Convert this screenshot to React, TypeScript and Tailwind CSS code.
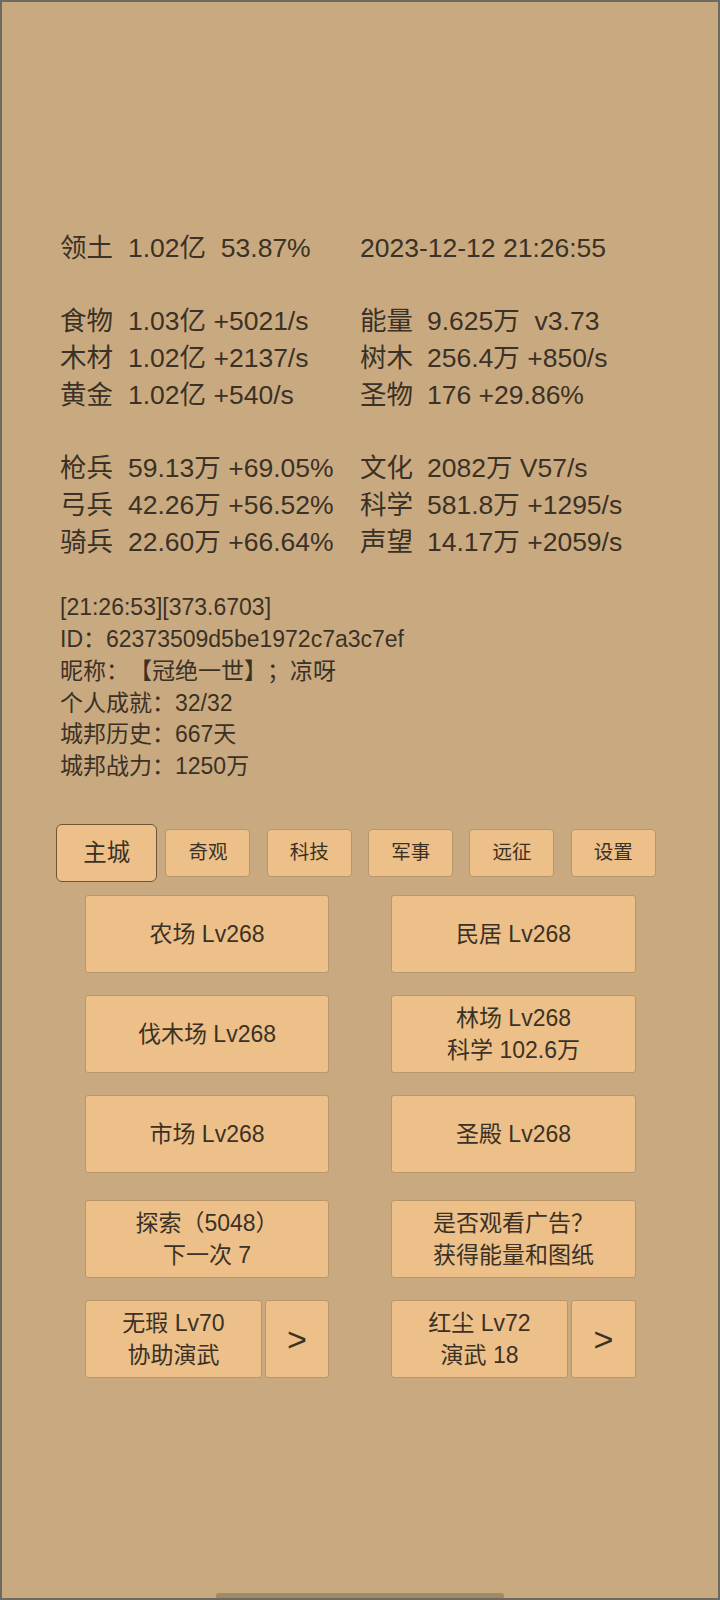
import React from 'react'

const font = "font-['Liberation_Sans','Noto_Sans_CJK_SC',sans-serif] [text-spacing-trim:space-all]"

type Row = [string, string, string, string] | null

const stats: Row[] = [
    ['领土', '1.02亿  53.87%', '', '2023-12-12 21:26:55'],
    null,
    ['食物', '1.03亿 +5021/s', '能量', '9.625万  v3.73'],
    ['木材', '1.02亿 +2137/s', '树木', '256.4万 +850/s'],
    ['黄金', '1.02亿 +540/s', '圣物', '176 +29.86%'],
    null,
    ['枪兵', '59.13万 +69.05%', '文化', '2082万 V57/s'],
    ['弓兵', '42.26万 +56.52%', '科学', '581.8万 +1295/s'],
    ['骑兵', '22.60万 +66.64%', '声望', '14.17万 +2059/s'],
]

const info = [
    '[21:26:53][373.6703]',
    'ID：62373509d5be1972c7a3c7ef',
    '昵称：【冠绝一世】；凉呀',
    '个人成就：32/32',
    '城邦历史：667天',
    '城邦战力：1250万',
]

const tabs = ['主城', '奇观', '科技', '军事', '远征', '设置']

const Btn = ({
    children,
    className = '',
}: {
    children: React.ReactNode
    className?: string
}) => (
    <div
        className={
            'flex flex-col items-center justify-center bg-[#ecc088] border border-[#b8956b] rounded-[3px] text-[23px] leading-[32px] text-[#3b3126] whitespace-pre ' +
            className
        }
    >
        {children}
    </div>
)

const App = () => {
    return (
        <div
            className={`relative w-[720px] h-[1600px] box-border border-2 border-[#6f6a60] bg-[#c9aa80] text-[#3b3126] ${font}`}
        >
            {/* resource stats */}
            <div className="pt-[228px] pl-[58px] text-[26.5px] leading-[36.7px] whitespace-pre">
                {stats.map((r, i) =>
                    r === null ? (
                        <div key={i} className="h-[36.7px]" />
                    ) : (
                        <div key={i} className="flex">
                            <div className="flex w-[300px]">
                                <span className="w-[68px]">{r[0]}</span>
                                <span>{r[1]}</span>
                            </div>
                            <div className="flex">
                                {r[2] && <span className="w-[67px]">{r[2]}</span>}
                                <span>{r[3]}</span>
                            </div>
                        </div>
                    )
                )}
            </div>

            {/* player info */}
            <div className="mt-[32px] pl-[58px] text-[23px] leading-[31.8px] whitespace-pre">
                {info.map((t) => (
                    <div key={t}>{t}</div>
                ))}
            </div>

            {/* tabs */}
            <div className="mt-[41px] ml-[54px] flex h-[58px]">
                {tabs.map((t, i) => (
                    <div key={t} className="w-[101.33px] flex items-center justify-center">
                        {i === 0 ? (
                            <div className="w-[102px] h-[58px] flex items-center justify-center bg-[#ecc088] border border-[#6f553a] rounded-[6px] text-[23.4px]">
                                {t}
                            </div>
                        ) : (
                            <div className="w-[85px] h-[48px] flex items-center justify-center bg-[#ecc088] border border-[#b8956b] rounded-[4px] text-[19.5px]">
                                {t}
                            </div>
                        )}
                    </div>
                ))}
            </div>

            {/* buildings */}
            <div className="mt-[13px] ml-[83px] w-[551px] grid grid-cols-[244px_245px] gap-x-[62px]">
                <Btn className="h-[78px]">农场 Lv268</Btn>
                <Btn className="h-[78px]">民居 Lv268</Btn>
                <Btn className="h-[78px] mt-[22px]">伐木场 Lv268</Btn>
                <Btn className="h-[78px] mt-[22px]">
                    <span>林场 Lv268</span>
                    <span>科学 102.6万</span>
                </Btn>
                <Btn className="h-[78px] mt-[22px]">市场 Lv268</Btn>
                <Btn className="h-[78px] mt-[22px]">圣殿 Lv268</Btn>
                <Btn className="h-[78px] mt-[27px]">
                    <span>探索（5048）</span>
                    <span>下一次 7</span>
                </Btn>
                <Btn className="h-[78px] mt-[27px]">
                    <span>是否观看广告？</span>
                    <span>获得能量和图纸</span>
                </Btn>
                <div className="flex gap-[3px] mt-[22px]">
                    <Btn className="h-[78px] w-[177px]">
                        <span>无瑕 Lv70</span>
                        <span>协助演武</span>
                    </Btn>
                    <Btn className="h-[78px] flex-1 text-[34px]">&gt;</Btn>
                </div>
                <div className="flex gap-[3px] mt-[22px]">
                    <Btn className="h-[78px] w-[177px]">
                        <span>红尘 Lv72</span>
                        <span>演武 18</span>
                    </Btn>
                    <Btn className="h-[78px] flex-1 text-[34px]">&gt;</Btn>
                </div>
            </div>

            {/* home indicator */}
            <div className="absolute left-[214px] bottom-0 w-[288px] h-[5px] rounded-t-[3px] bg-[#a08a69]" />
        </div>
    )
}

export default App
